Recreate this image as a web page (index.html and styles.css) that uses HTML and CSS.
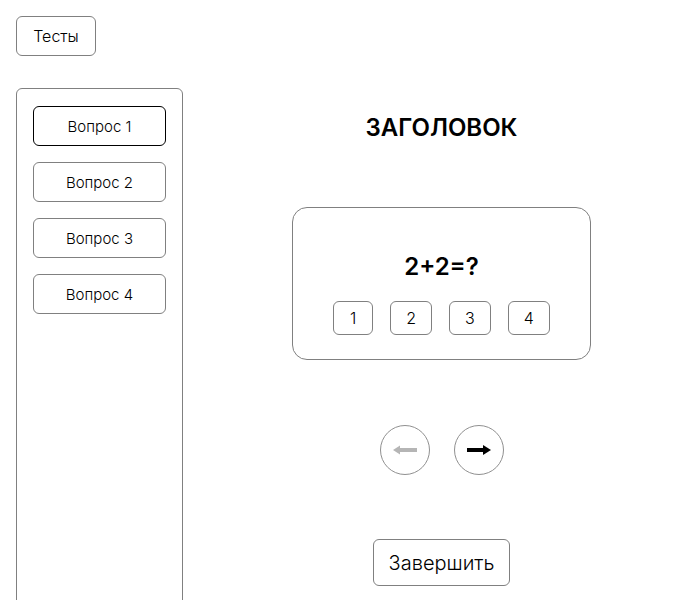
FILE: index.html
```html
<!DOCTYPE html>
<html lang="ru">
<head>
<meta charset="utf-8">
<link rel="stylesheet" href="styles.css">
</head>
<body>
<header class="top">
  <button class="btn tests-btn">Тесты</button>
</header>
<div class="layout">
  <aside class="sidebar">
    <button class="btn q-btn active">Вопрос 1</button>
    <button class="btn q-btn">Вопрос 2</button>
    <button class="btn q-btn">Вопрос 3</button>
    <button class="btn q-btn">Вопрос 4</button>
  </aside>
  <main class="main">
    <h1 class="title">ЗАГОЛОВОК</h1>
    <section class="card">
      <div class="question">2+2=?</div>
      <div class="answers">
        <button class="btn ans">1</button>
        <button class="btn ans">2</button>
        <button class="btn ans">3</button>
        <button class="btn ans">4</button>
      </div>
    </section>
    <nav class="arrows">
      <button class="circle prev" aria-label="Назад">
        <svg width="26" height="12" viewBox="0 0 26 12"><path d="M25 6H7" stroke="#b5b5b5" stroke-width="4"/><path d="M1 6L8 1.5V10.5Z" fill="#b5b5b5"/></svg>
      </button>
      <button class="circle next" aria-label="Вперёд">
        <svg width="26" height="12" viewBox="0 0 26 12"><path d="M1 6H19" stroke="#000" stroke-width="4"/><path d="M25 6L17 1V11Z" fill="#000"/></svg>
      </button>
    </nav>
    <button class="btn finish">Завершить</button>
  </main>
</div>
</body>
</html>
```
FILE: styles.css
```css
* { box-sizing: border-box; }
html, body { margin: 0; background: #fff; }
body {
  font-family: Inter, "Noto Sans", "Liberation Sans", sans-serif;
  color: #000;
  padding: 16px 0 0 16px;
  overflow: hidden;
  height: 600px;
}
.btn {
  font-family: inherit;
  background: #fff;
  color: #000;
  border: 1px solid #808080;
  border-radius: 6px;
  cursor: pointer;
  padding: 0;
  font-weight: 300;
}
.top { display: flex; }
.tests-btn {
  width: 80px;
  height: 40px;
  font-size: 16px;
}
.layout {
  display: flex;
  margin-top: 32px;
}
.sidebar {
  width: 167px;
  min-height: 560px;
  border: 1px solid #808080;
  border-radius: 6px;
  padding: 17px 16px;
  display: flex;
  flex-direction: column;
  gap: 16px;
  flex-shrink: 0;
}
.q-btn {
  width: 133px;
  height: 40px;
  font-size: 15px;
}
.q-btn.active { border-color: #000; }
.main {
  flex: 1;
  display: flex;
  flex-direction: column;
  align-items: center;
  gap: 65px;
  padding-top: 25px;
}
.title {
  margin: 0;
  font-size: 24px;
  line-height: 29px;
  font-weight: 600;
}
.card {
  width: 299px;
  height: 153px;
  border: 1px solid #808080;
  border-radius: 15px;
  padding-top: 44px;
  display: flex;
  flex-direction: column;
  align-items: center;
  gap: 20px;
}
.question {
  font-size: 24px;
  line-height: 29px;
  font-weight: 600;
}
.answers {
  display: flex;
  gap: 17px;
}
.ans {
  height: 34px;
  min-width: 40px;
  padding: 0 15px;
  font-size: 16px;
}
.arrows {
  display: flex;
  gap: 24px;
}
.circle {
  width: 50px;
  height: 50px;
  border-radius: 50%;
  border: 1px solid #909090;
  background: #fff;
  display: flex;
  align-items: center;
  justify-content: center;
  padding: 0;
  cursor: pointer;
}
.finish {
  width: 137px;
  height: 47px;
  font-size: 20px;
  margin-top: -1px;
}
```
